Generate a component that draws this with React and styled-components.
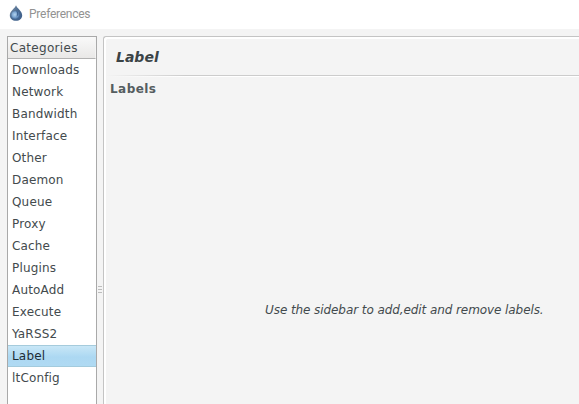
import React from "react";
import styled, { createGlobalStyle } from "styled-components";

const GlobalStyle = createGlobalStyle`
  * { box-sizing: border-box; }
  body { margin: 0; overflow: hidden; }
`;

const Window = styled.div`
  height: 100vh;
  display: flex;
  flex-direction: column;
  overflow: hidden;
  background: #f4f4f4;
  color: #434a4d;
  font: 12px/22px "DejaVu Sans", sans-serif;
  white-space: nowrap;
`;

const TitleBar = styled.header`
  flex: 0 0 29px;
  display: flex;
  align-items: flex-start;
  padding-left: 9px;
  background: #fff;
  color: #929292;
  font: 12px/28px Roboto, sans-serif;
  letter-spacing: -0.25px;
`;

const AppIcon = styled.svg`
  width: 14px;
  height: 16px;
  margin: 5px 6px 0 0;
`;

const Body = styled.main`
  flex: 1;
  min-height: 0;
  display: flex;
  padding: 7px 0 0 7px;
`;

const Sidebar = styled.nav`
  flex: 0 0 90px;
  border: 1px solid #a9a9a9;
  border-bottom: 0;
  background: #fff;
`;

const SidebarHeader = styled.div`
  height: 22px;
  padding-left: 2px;
  line-height: 22px;
  letter-spacing: 0.3px;
  border-bottom: 1px solid #b2b2b2;
  border-right: 1px solid #f4f4f4;
  background: linear-gradient(#f9f9f9, #e9e8e7);
`;

const Category = styled.div`
  height: 22px;
  padding-left: 4px;
  line-height: 22px;
  letter-spacing: 0.17px;
  color: ${(p) => (p.$selected ? "#1d2c36" : "inherit")};
  background: ${(p) => (p.$selected ? "linear-gradient(#cbe8f7, #acd8f2 55%, #b0daf3)" : "none")};
  box-shadow: ${(p) => (p.$selected ? "inset 0 1px #a5cbdc, inset 0 -1px #a3cbdd" : "none")};
`;

const Splitter = styled.div`
  flex: 0 0 6px;
  display: flex;
  flex-direction: column;
  align-items: center;
  gap: 2px;
  padding-top: 250px;
`;

const Grip = styled.i`
  width: 4px;
  height: 1px;
  background: #bdbdbd;
`;

const Panel = styled.section`
  flex: 1;
  min-width: 0;
  display: flex;
  flex-direction: column;
  border-top: 1px solid #c4c4c4;
  border-left: 1px solid #c4c4c4;
  border-top-left-radius: 3px;
  box-shadow: inset 2px 2px #fff;
`;

const PageTitle = styled.h1`
  height: 38px;
  margin: 0 0 0 2px;
  padding-left: 10px;
  font: italic bold 14px/40px "DejaVu Sans", sans-serif;
  color: #3b4346;
`;

const Divider = styled.div`
  flex: 0 0 2px;
  margin-left: 2px;
  background:
    linear-gradient(90deg, #f4f4f4, #ccc 80px) top / 100% 1px no-repeat,
    linear-gradient(90deg, #f4f4f4, #fff 80px) bottom / 100% 1px no-repeat;
`;

const SectionTitle = styled.h2`
  margin: 0;
  padding-left: 6px;
  font: bold 12px/24px "DejaVu Sans", sans-serif;
  letter-spacing: 0.45px;
  color: #555d60;
`;

const Hint = styled.p`
  margin: 198px 0 0;
  padding-left: 161px;
  font-style: italic;
  letter-spacing: -0.08px;
`;

const categories = [
  "Downloads", "Network", "Bandwidth", "Interface", "Other", "Daemon", "Queue",
  "Proxy", "Cache", "Plugins", "AutoAdd", "Execute", "YaRSS2", "Label", "ltConfig",
];

const Droplet = () => (
  <AppIcon viewBox="0 0 14 16" aria-hidden="true">
    <defs>
      <linearGradient id="shell" x1="0" y1="0" x2="1" y2="1">
        <stop offset="0" stopColor="#8497ab" />
        <stop offset="0.5" stopColor="#4a6a90" />
        <stop offset="1" stopColor="#3d5f8c" />
      </linearGradient>
      <radialGradient id="water" cx="42%" cy="45%" r="60%">
        <stop offset="0" stopColor="#b3d3ee" />
        <stop offset="0.5" stopColor="#82abd5" />
        <stop offset="1" stopColor="#41699b" />
      </radialGradient>
    </defs>
    <path d="M7 .2C6.200 3 .8 6 .8 10.200 .8 13.700 3.500 15.800 7 15.800s6.200-2.100 6.200-5.600C13.200 6 7.800 3 7 .2Z" fill="url(#shell)" />
    <ellipse cx="6.500" cy="10" rx="4.200" ry="4" fill="url(#water)" />
    <path d="M7.200 5.500c2.800 1.900 3.200 4.600.2 6.300.8-1.900.8-4.200-.2-6.300Z" fill="#2d4f7c" opacity=".7" />
  </AppIcon>
);

export default function App() {
  return (
    <Window>
      <GlobalStyle />
      <TitleBar><Droplet />Preferences</TitleBar>
      <Body>
        <Sidebar>
          <SidebarHeader>Categories</SidebarHeader>
          {categories.map((name) => (
            <Category key={name} $selected={name === "Label"}>{name}</Category>
          ))}
        </Sidebar>
        <Splitter><Grip /><Grip /><Grip /></Splitter>
        <Panel>
          <PageTitle>Label</PageTitle>
          <Divider />
          <SectionTitle>Labels</SectionTitle>
          <Hint>Use the sidebar to add,edit and remove labels.</Hint>
        </Panel>
      </Body>
    </Window>
  );
}
